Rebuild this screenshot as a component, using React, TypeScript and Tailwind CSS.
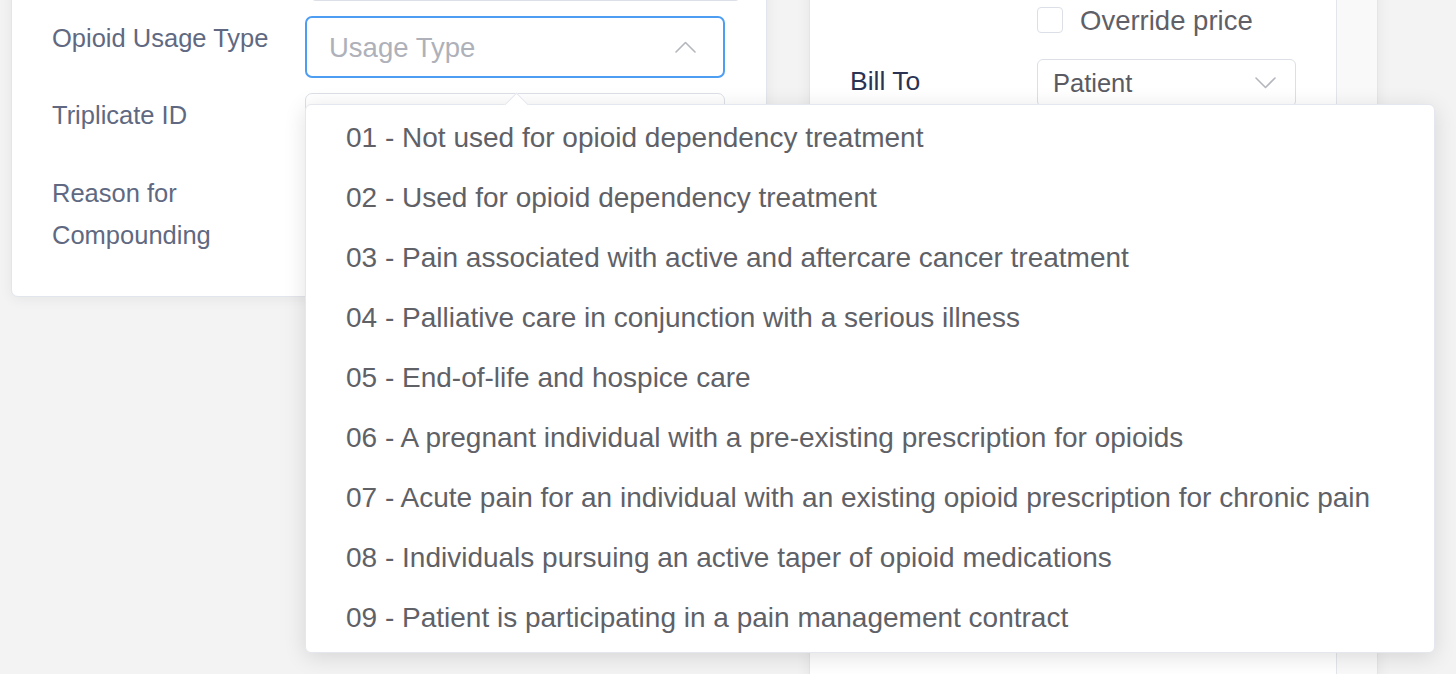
const usageTypes = [
  '01 - Not used for opioid dependency treatment',
  '02 - Used for opioid dependency treatment',
  '03 - Pain associated with active and aftercare cancer treatment',
  '04 - Palliative care in conjunction with a serious illness',
  '05 - End-of-life and hospice care',
  '06 - A pregnant individual with a pre-existing prescription for opioids',
  '07 - Acute pain for an individual with an existing opioid prescription for chronic pain',
  '08 - Individuals pursuing an active taper of opioid medications',
  '09 - Patient is participating in a pain management contract',
]

function Chevron({ up }: { up?: boolean }) {
  return (
    <svg width="21" height="12" viewBox="0 0 21 12" fill="none" className="shrink-0">
      <polyline
        points={up ? '1,11 10.5,1.5 20,11' : '1,1 10.5,10.5 20,1'}
        stroke="#b4b6bd"
        strokeWidth="1.6"
        strokeLinecap="round"
        strokeLinejoin="round"
      />
    </svg>
  )
}

function FieldLabel({ children }: { children: React.ReactNode }) {
  return (
    <div className="w-[253px] shrink-0 pt-[1px] text-[25.5px] leading-[42px] text-[#606981]">
      {children}
    </div>
  )
}

export default function App() {
  return (
    <div className="relative h-[674px] w-[1456px] overflow-hidden bg-[#f3f3f4] font-['Liberation_Sans',Arial,sans-serif]">
      <div className="-mt-[41px] flex items-start">
        {/* left card */}
        <div className="ml-[11px] w-[756px] rounded-b-[7px] border border-[#e3e5ec] bg-white pb-[40px] shadow-[0_2px_14px_rgba(0,0,0,0.06)]">
          <div className="ml-[298px] h-[41px] w-[431px] rounded-b-[6px] border-x border-b border-[#dcdfe6]" />
          <div className="mt-[15px] flex flex-col gap-[15px] pl-[40px]">
            <div className="flex items-start">
              <FieldLabel>Opioid Usage Type</FieldLabel>
              <div className="flex h-[62px] w-[420px] items-center justify-between rounded-[7px] border-2 border-[#4d9ef2] pl-[22px] pr-[27px]">
                <span className="pt-[1px] text-[27.5px] text-[#aeb1b9]">Usage Type</span>
                <Chevron up />
              </div>
            </div>
            <div className="flex items-start">
              <FieldLabel>Triplicate ID</FieldLabel>
              <div className="h-[62px] w-[420px] rounded-[7px] border border-[#dcdfe6]" />
            </div>
            <div className="mt-[1px] flex items-start">
              <FieldLabel>
                Reason for
                <br />
                Compounding
              </FieldLabel>
              <div className="h-[84px] w-[420px] rounded-[7px] border border-[#dcdfe6]" />
            </div>
          </div>
        </div>

        {/* right card */}
        <div className="ml-[42px] flex h-[780px] w-[569px] border border-[#e3e5ec] bg-white shadow-[0_2px_14px_rgba(0,0,0,0.06)]">
          <div className="flex-1 pl-[40px] pt-[47px]">
            <div className="ml-[187px] flex h-[26px] items-center gap-[17px]">
              <div className="h-[26px] w-[26px] rounded-[4px] border border-[#dcdfe6] bg-white" />
              <span className="pt-[2px] text-[27.5px] text-[#5f6067]">Override price</span>
            </div>
            <div className="mt-[26px] flex items-start">
              <div className="w-[187px] pt-[1px] text-[26.5px] leading-[42px] text-[#2a3353]">Bill To</div>
              <div className="flex h-[48px] w-[259px] items-center justify-between rounded-[6px] border border-[#dcdfe6] pl-[15px] pr-[19px]">
                <span className="text-[25.5px] text-[#5a5b62]">Patient</span>
                <Chevron />
              </div>
            </div>
          </div>
          <div className="w-[41px] border-l border-[#e3e5ec] bg-[#f9f9fa]" />
        </div>
      </div>

      {/* open dropdown */}
      <div className="absolute left-[305px] top-[104px] h-[549px] w-[1130px] rounded-[6px] border border-[#e4e7ed] bg-white pt-[3px] shadow-[0_4px_22px_rgba(0,0,0,0.12)]">
        <div className="absolute -top-[9px] left-[202px] h-[17px] w-[17px] rotate-45 border-l border-t border-[#e4e7ed] bg-white" />
        <ul className="relative">
          {usageTypes.map((t) => (
            <li key={t} className="flex h-[60px] items-center whitespace-nowrap pl-[40px] text-[28px] text-[#606167]">
              {t}
            </li>
          ))}
        </ul>
      </div>
    </div>
  )
}
